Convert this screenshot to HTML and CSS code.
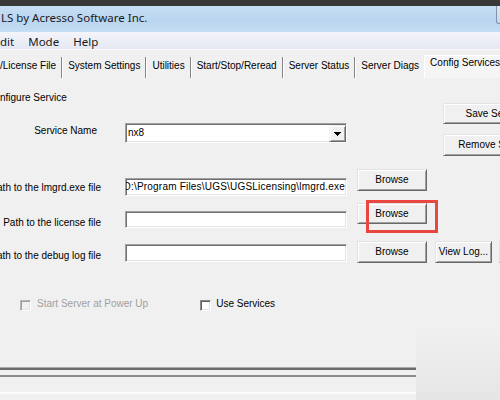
FILE: index.html
```html
<!DOCTYPE html>
<html>
<head>
<meta charset="utf-8">
<link rel="stylesheet" href="styles.css">
</head>
<body>
<div class="window">
  <div class="titlebar">
    <span class="title">LS by Acresso Software Inc.</span>
    <span class="winbtn"></span>
  </div>
  <div class="menubar">
    <span class="menu first">dit</span>
    <span class="menu">Mode</span>
    <span class="menu">Help</span>
  </div>
  <div class="tabs">
    <span class="tab first">/License File</span>
    <span class="tab">System Settings</span>
    <span class="tab">Utilities</span>
    <span class="tab">Start/Stop/Reread</span>
    <span class="tab">Server Status</span>
    <span class="tab last">Server Diags</span>
    <span class="tab active">Config Services</span>
  </div>
  <div class="panel">
    <div class="top">
      <div class="top-left">
        <div class="heading">nfigure Service</div>
        <div class="row service-row">
          <span class="label name">Service Name</span>
          <div class="field select">
            <span class="value">nx8</span>
            <span class="arrow"><svg width="7" height="4" viewBox="0 0 7 4" shape-rendering="crispEdges"><path d="M0 0h7v1H0zM1 1h5v1H1zM2 2h3v1H2zM3 3h1v1H3z" fill="#000"/></svg></span>
          </div>
        </div>
      </div>
      <div class="top-right">
        <button class="btn wide save">Save Service</button>
        <button class="btn wide remove">Remove Service</button>
      </div>
    </div>

    <div class="row path-row">
      <span class="label">Path to the lmgrd.exe file</span>
      <div class="field text"><span class="value path">D:\Program Files\UGS\UGSLicensing\lmgrd.exe</span></div>
      <button class="btn browse">Browse</button>
    </div>

    <div class="row lic-row">
      <span class="label">Path to the license file</span>
      <div class="field text"></div>
      <span class="hl"><button class="btn browse">Browse</button></span>
    </div>

    <div class="row log-row">
      <span class="label">Path to the debug log file</span>
      <div class="field text"></div>
      <button class="btn browse">Browse</button>
      <button class="btn viewlog">View Log...</button>
      <button class="btn extra"></button>
    </div>

    <div class="checks">
      <div class="check">
        <span class="box disabled"></span>
        <span class="ctext disabled">Start Server at Power Up</span>
      </div>
      <div class="check second">
        <span class="box"></span>
        <span class="ctext">Use Services</span>
      </div>
    </div>

    <div class="footer">
      <div class="footer-lines">
        <div class="ln1"></div>
        <div class="ln2"></div>
        <div class="ln3"></div>
      </div>
      <div class="footer-side"></div>
    </div>
  </div>
</div>
</body>
</html>
```

FILE: styles.css
```css
* { box-sizing: border-box; }

html, body {
  margin: 0;
  width: 500px;
  height: 400px;
  overflow: hidden;
}

body {
  background: #f0f0f0;
  font-family: "Liberation Sans", Arial, sans-serif;
  font-size: 10px;
  color: #000;
}

.window { width: 500px; height: 400px; overflow: hidden; }

/* title bar */
.titlebar {
  height: 32px;
  border-top: 6px solid #393939;
  background: linear-gradient(#c7dff5, #bad5f0 55%, #c5ddf5);
  display: flex;
  align-items: flex-start;
}
.title {
  font-family: "Noto Sans", sans-serif;
  font-size: 11.5px;
  line-height: 16px;
  margin-top: 4px;
  padding-left: 1px;
  color: #1a1a1a;
  white-space: nowrap;
}
.winbtn {
  margin-left: auto;
  width: 4px;
  height: 18px;
  border-left: 1px solid #8395ab;
  border-bottom: 1px solid #8395ab;
  border-bottom-left-radius: 3px;
  background: linear-gradient(#dce9f6, #c5d9ee);
}

/* menu bar */
.menubar {
  height: 18px;
  background: linear-gradient(#f4f5fb, #e5e8f2);
  border-bottom: 1px solid #fafafa;
  display: flex;
  font-family: "Noto Sans", sans-serif;
  font-size: 11.5px;
  line-height: 16px;
  color: #1a1a1a;
}
.menu { padding: 2px 7px 0; }
.menu.first { margin-left: -7px; }

/* tabs */
.tabs {
  height: 28px;
  padding-top: 5px;
  display: flex;
  align-items: flex-start;
  white-space: nowrap;
}
.tab {
  flex: none;
  height: 21px;
  margin-top: 2px;
  padding: 2.5px 5px 0;
  line-height: 12px;
  border-left: 1px solid #ffffff;
  border-right: 1px solid #858585;
}
.tab.first { border-left: none; padding-left: 0; }
.tab.last { border-right: none; }
.tab.active {
  margin-top: 0;
  height: 23px;
  padding-top: 0.5px;
  background: #f5f5f5;
  border-top: 1px solid #ffffff;
  border-right: none;
}

/* form */
.top { display: flex; height: 78px; }
.top-left { flex: none; width: 443px; }
.top-right {
  flex: none;
  padding-top: 25px;
  display: flex;
  flex-direction: column;
  align-items: flex-start;
}
.heading { margin-top: 14px; line-height: 12px; white-space: nowrap; }

.row { display: flex; align-items: flex-start; }
.service-row { margin-top: 19px; }
.path-row { margin-top: 13px; }
.lic-row { margin-top: 4px; }
.log-row { margin-top: 12px; }

.label {
  flex: none;
  width: 101px;
  display: flex;
  justify-content: flex-end;
  white-space: nowrap;
  line-height: 12px;
}
.label.name { padding-right: 4px; margin-top: 2px; }
.path-row .label { margin-top: 13px; }
.lic-row .label { margin-top: 17px; }
.log-row .label { margin-top: 9px; }

.field {
  flex: none;
  width: 222px;
  margin-left: 24px;
  background: #ffffff;
  border: 1px solid;
  border-color: #a0a0a0 #ffffff #ffffff #a0a0a0;
  box-shadow: inset 1px 1px 0 #707070, inset -1px -1px 0 #e3e3e3;
  display: flex;
  align-items: center;
  overflow: hidden;
  line-height: 12px;
  white-space: nowrap;
}
.field.select { height: 20px; padding-left: 2px; }
.field.select .value { flex: 1; }
.field.text { height: 18px; justify-content: flex-end; padding-right: 1px; }
.path-row .field { margin-top: 9px; }
.lic-row .field { margin-top: 11px; height: 17px; }
.log-row .field { margin-top: 3px; }
.value.path { flex: none; letter-spacing: 0.2px; }

.arrow {
  flex: none;
  align-self: stretch;
  margin-top: 1px;
  width: 17px;
  background: #f0f0f0;
  border: 1px solid;
  border-color: #f0f0f0 #696969 #696969 #f0f0f0;
  box-shadow: inset 1px 1px 0 #ffffff, inset -1px -1px 0 #a0a0a0;
  display: flex;
  align-items: center;
  justify-content: center;
}
.arrow svg { display: block; }

.btn {
  flex: none;
  font: inherit;
  color: #000;
  background: #f0f0f0;
  border: 1px solid;
  border-color: #e3e3e3 #696969 #696969 #e3e3e3;
  box-shadow: inset 1px 1px 0 #ffffff, inset -1px -1px 0 #a0a0a0;
  padding: 0;
  margin: 0;
  line-height: 12px;
  text-align: center;
  white-space: nowrap;
}
.btn.wide { width: 104px; }
.btn.save { height: 21px; }
.btn.remove { height: 22px; margin-top: 10px; }
.btn.browse { width: 70px; height: 22px; margin-left: 10px; }
.btn.viewlog { width: 57px; height: 22px; margin-left: 8px; }
.btn.extra { width: 60px; height: 22px; margin-left: 7px; }

.hl {
  flex: none;
  position: relative;
  margin-left: 10px;
  margin-top: 3px;
  display: block;
}
.hl .btn.browse { margin-left: 0; height: 21px; display: block; }
.hl::after {
  content: "";
  position: absolute;
  left: 9px;
  top: -3px;
  width: 66px;
  height: 27px;
  border: 3px solid #e8463f;
}

/* checkboxes */
.checks {
  display: flex;
  margin-top: 35px;
  padding-left: 20px;
  height: 13px;
}
.check { display: flex; align-items: flex-start; }
.check.second { margin-left: 52px; }
.box {
  flex: none;
  width: 11px;
  height: 11px;
  margin-top: 2px;
  background: #ffffff;
  border: 1px solid;
  border-color: #8a8a8a #ffffff #ffffff #8a8a8a;
  box-shadow: inset 1px 1px 0 #5f5f5f, inset -1px -1px 0 #e3e3e3;
}
.box.disabled {
  background: #f0f0f0;
  border-color: #b5b5b5 #ffffff #ffffff #b5b5b5;
  box-shadow: inset 1px 1px 0 #a0a0a0, inset -1px -1px 0 #e3e3e3;
}
.ctext { margin-left: 6px; line-height: 12px; white-space: nowrap; }
.check.second .ctext { margin-left: 5px; }
.ctext.disabled { color: #a0a0a0; }

/* bottom */
.footer { display: flex; height: 70px; margin-top: 20px; }
.footer-lines { flex: none; width: 416px; padding-top: 36px; }
.ln1 { height: 3px; border-top: 1px solid #a9a9a9; background: #6b6b6b; }
.ln2 { height: 2px; margin-top: 5px; background: #8b8b8b; }
.ln3 { height: 2px; margin-top: 15px; background: #fbfbfb; }
.footer-side { flex: 1; background: linear-gradient(#f0f0f0, #e5e5e5); }
```
